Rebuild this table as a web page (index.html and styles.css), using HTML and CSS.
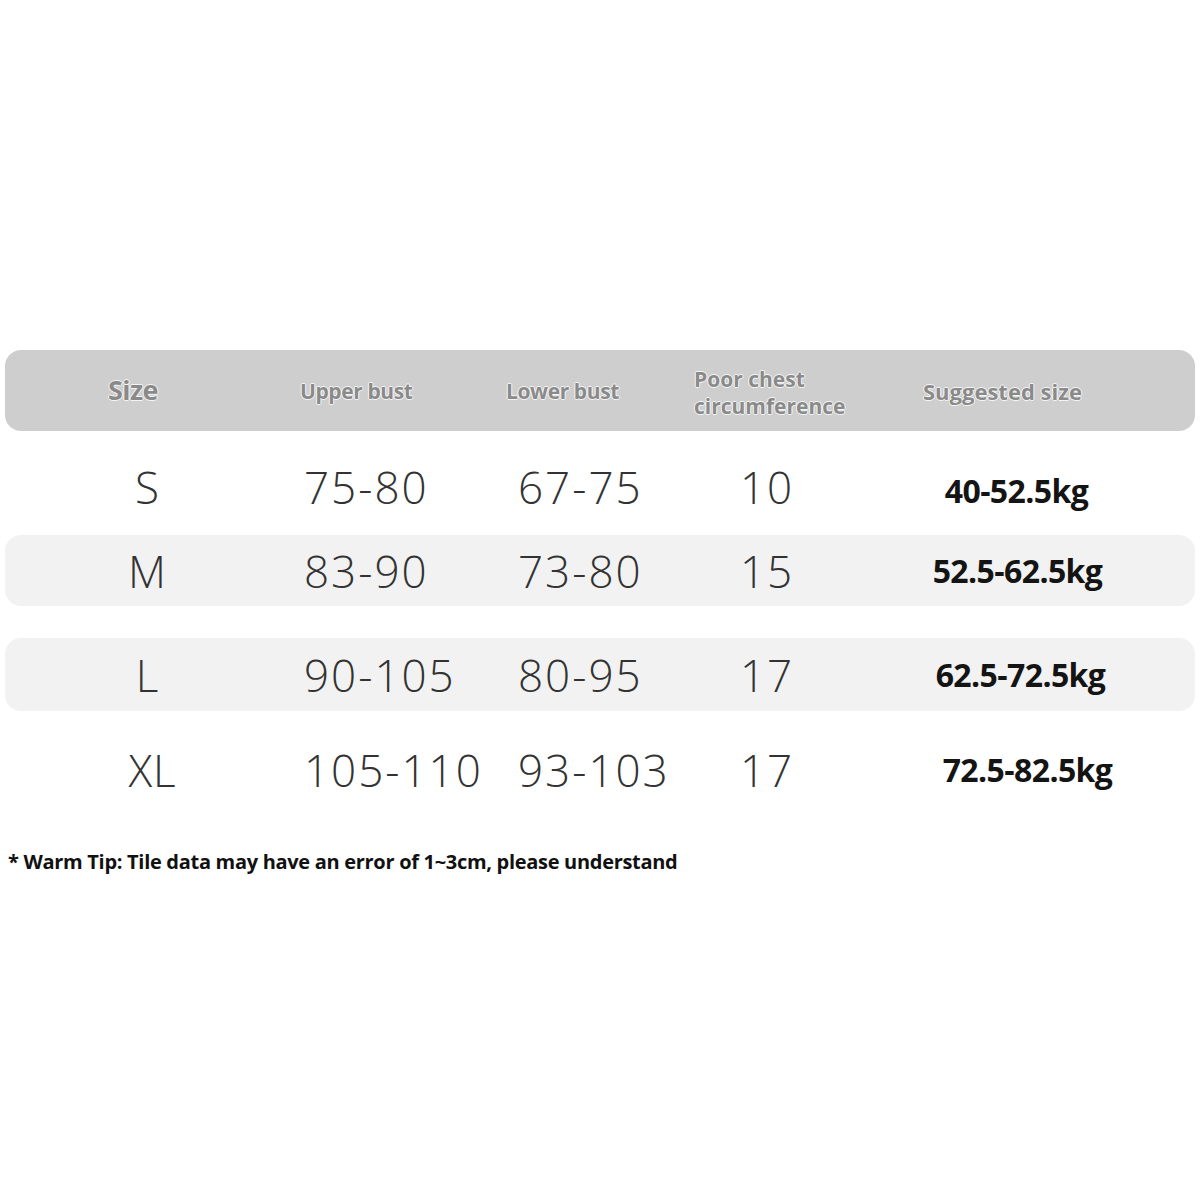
FILE: index.html
```html
<!DOCTYPE html>
<html>
<head>
<meta charset="utf-8">
<link rel="stylesheet" href="styles.css">
</head>
<body>
<div class="chart">
  <div class="row head">
    <div class="c c1"><span class="h-size">Size</span></div>
    <div class="c c2">Upper bust</div>
    <div class="c c3">Lower bust</div>
    <div class="c c4"><span class="ln">Poor chest</span><span class="ln">circumference</span></div>
    <div class="c c5">Suggested size</div>
  </div>
  <div class="row data r-s">
    <div class="c c1">S</div>
    <div class="c c2">75-80</div>
    <div class="c c3">67-75</div>
    <div class="c c4">10</div>
    <div class="c c5 kg">40-52.5kg</div>
  </div>
  <div class="row data band r-m">
    <div class="c c1">M</div>
    <div class="c c2">83-90</div>
    <div class="c c3">73-80</div>
    <div class="c c4">15</div>
    <div class="c c5 kg">52.5-62.5kg</div>
  </div>
  <div class="row data band r-l">
    <div class="c c1">L</div>
    <div class="c c2">90-105</div>
    <div class="c c3">80-95</div>
    <div class="c c4">17</div>
    <div class="c c5 kg">62.5-72.5kg</div>
  </div>
  <div class="row data r-xl">
    <div class="c c1">XL</div>
    <div class="c c2">105-110</div>
    <div class="c c3">93-103</div>
    <div class="c c4">17</div>
    <div class="c c5 kg">72.5-82.5kg</div>
  </div>
</div>
<p class="tip">* Warm Tip: Tile data may have an error of 1~3cm, please understand</p>
</body>
</html>
```
FILE: styles.css
```css
html, body {
  margin: 0;
  padding: 0;
  background: #ffffff;
}
body {
  width: 1200px;
  height: 1200px;
  padding-top: 350px;
  box-sizing: border-box;
}
.chart {
  margin: 0 5px;
  width: 1190px;
}
.row {
  display: grid;
  grid-template-columns: 285px 200px 200px 200px 305px;
  align-items: center;
}
.head {
  height: 81px;
  background: #cecece;
  border-radius: 16px;
  font-family: "Open Sans", "Liberation Sans", sans-serif;
  font-weight: 700;
  font-size: 21px;
  letter-spacing: -0.4px;
  color: #8a8a8a;
  text-shadow: 1px 0 0 #f4f4f4, -1px 0 0 #f4f4f4, 0 1px 0 #f4f4f4, 0 -1px 0 #f4f4f4;
  line-height: 26px;
}
.head .c1 { padding-left: 103px; }
.head .h-size { font-size: 27px; letter-spacing: -0.6px; }
.head .c2 { padding-left: 10px; }
.head .c3 { padding-left: 16px; }
.head .c4 {
  padding-left: 4px;
  padding-top: 4px;
  font-size: 21px;
  letter-spacing: 0;
  display: flex;
  flex-direction: column;
  gap: 2px;
}
.head .c4 .ln { line-height: 25px; }
.head .c5 { padding-left: 33px; font-size: 22px; letter-spacing: 0; }

.data {
  font-family: "Open Sans", "Liberation Sans", sans-serif;
  font-weight: 300;
  font-size: 44px;
  color: #333333;
  letter-spacing: 2px;
  line-height: 50px;
}
.data .c1 { text-align: center; letter-spacing: 1px; }
.data .c2 { padding-left: 14px; }
.data .c3 { padding-left: 28px; }
.data .c4 { padding-left: 50px; }
.data .kg {
  font-weight: 700;
  font-size: 32px;
  letter-spacing: -0.6px;
  color: #141414;
  text-align: center;
}
.band {
  background: #f2f2f2;
  border-radius: 16px;
}
.r-s { height: 104px; padding-top: 8px; box-sizing: border-box; }
.r-s .kg { padding-top: 8px; padding-right: 52px; }
.r-m { height: 71px; }
.r-m .kg { padding-right: 50px; }
.r-l { height: 73px; margin-top: 32px; }
.r-l .kg { padding-right: 44px; }
.r-xl { height: 118px; }
.r-xl .c1 { padding-left: 10px; }
.r-xl .kg { padding-right: 30px; }

.tip {
  margin: 19px 0 0;
  padding: 0 8px;
  font-family: "Open Sans", "Liberation Sans", sans-serif;
  font-weight: 700;
  font-size: 20px;
  letter-spacing: -0.3px;
  color: #111111;
  line-height: 28px;
}
```
